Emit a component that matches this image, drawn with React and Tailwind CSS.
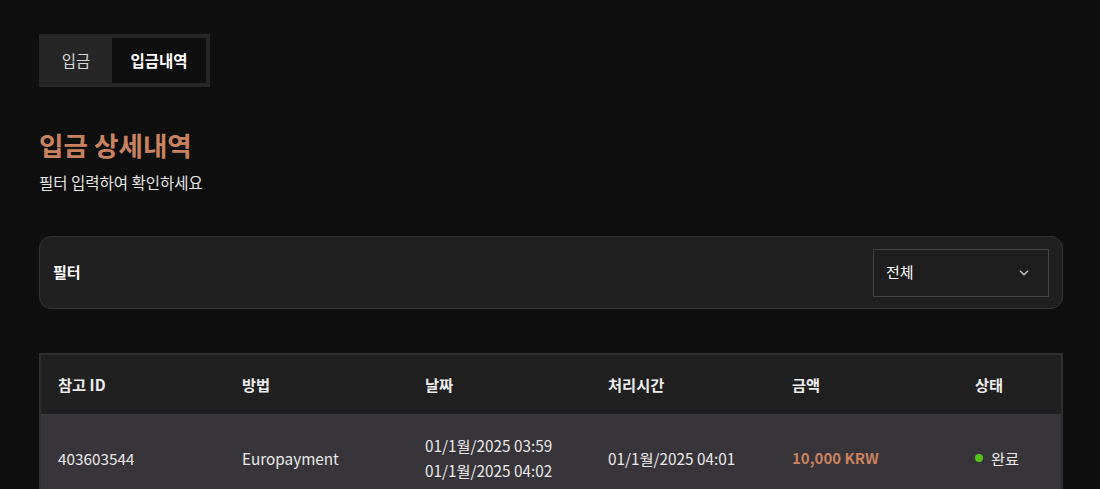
import { useState } from "react";

const font = { fontFamily: '"Noto Sans CJK KR", "Noto Sans", sans-serif' };

const rows = [
  {
    id: "403603544",
    method: "Europayment",
    dates: ["01/1월/2025 03:59", "01/1월/2025 04:02"],
    processed: "01/1월/2025 04:01",
    amount: "10,000 KRW",
    status: "완료",
  },
];

function Chevron() {
  return (
    <svg width="14" height="14" viewBox="0 0 24 24" fill="none" stroke="#bdbdbd" strokeWidth="2.6" strokeLinecap="round" strokeLinejoin="round">
      <path d="M6 9l6 6 6-6" />
    </svg>
  );
}

export default function App() {
  const [tab, setTab] = useState("history");

  return (
    <div className="min-h-[489px] bg-[#0f0f0f] text-white pl-[39px] pr-[37px] pt-[34px] pb-10" style={font}>
      <div className="inline-flex bg-[#262626] p-1">
        <button
          onClick={() => setTab("deposit")}
          className={`w-[69px] h-[45px] pr-[3px] text-[15.5px] ${tab === "deposit" ? "bg-[#0f0f0f] font-bold" : "text-[#d6d6d6]"}`}
        >
          입금
        </button>
        <button
          onClick={() => setTab("history")}
          className={`w-[94px] h-[45px] text-[15.5px] ${tab === "history" ? "bg-[#0f0f0f] font-bold" : "text-[#d6d6d6]"}`}
        >
          입금내역
        </button>
      </div>

      <h1 className="mt-[38px] text-[26.6px] leading-[40px] font-bold text-[#c9825f]">입금 상세내역</h1>
      <p className="mt-[6px] text-[15.5px] leading-[22px] text-[#e6e6e6]">필터 입력하여 확인하세요</p>

      <div className="mt-[43px] flex items-center justify-between h-[73px] rounded-xl border border-[#333333] bg-[#202020] pl-[13px] pr-[13px]">
        <span className="text-[15px] font-bold">필터</span>
        <div className="flex items-center justify-between w-[176px] h-[48px] border border-[#444444] bg-[#1e1e1e] pl-3 pr-[17px]">
          <span className="text-[15px]">전체</span>
          <Chevron />
        </div>
      </div>

      <div className="mt-[44px] border-2 border-[#2f2f2f]">
        <div className="grid grid-cols-[184px_183px_183px_184px_183px_1fr] h-[59px] items-center bg-[#202020] text-[15.3px] font-bold text-[#ececec]">
          {["참고 ID", "방법", "날짜", "처리시간", "금액", "상태"].map((h) => (
            <div key={h} className="pl-[17px]">{h}</div>
          ))}
        </div>
        {rows.map((r) => (
          <div key={r.id} className="grid grid-cols-[184px_183px_183px_184px_183px_1fr] h-[88px] items-center bg-[#38353a] text-[15.3px] text-[#e8e8e8]">
            <div className="pl-[17px]">{r.id}</div>
            <div className="pl-[17px]">{r.method}</div>
            <div className="pl-[17px] leading-[25px]">
              {r.dates.map((d) => (
                <div key={d}>{d}</div>
              ))}
            </div>
            <div className="pl-[17px]">{r.processed}</div>
            <div className="pl-[17px] text-[15px] font-bold text-[#c9825f]">{r.amount}</div>
            <div className="pl-[17px] flex items-center gap-2">
              <span className="w-2 h-2 rounded-full bg-[#52c41a]" />
              {r.status}
            </div>
          </div>
        ))}
      </div>
    </div>
  );
}
